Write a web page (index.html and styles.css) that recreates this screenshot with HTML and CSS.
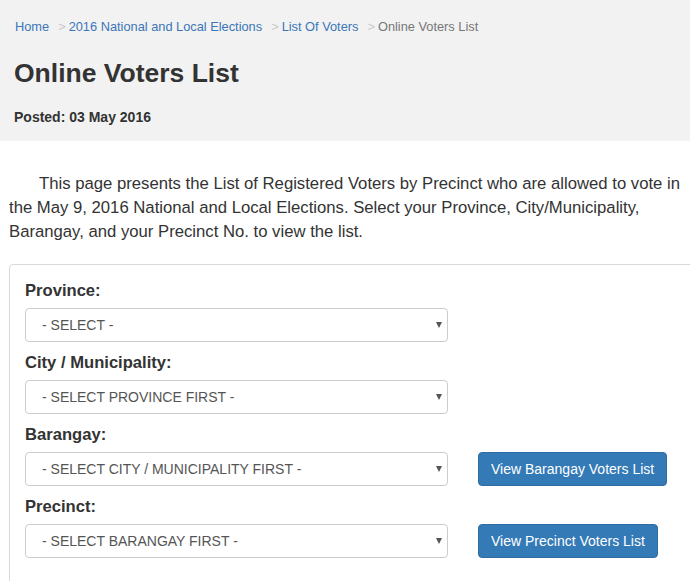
FILE: index.html
```html
<!DOCTYPE html>
<html lang="en">
<head>
<meta charset="utf-8">
<title>Online Voters List</title>
<link rel="stylesheet" href="styles.css">
</head>
<body>
<header class="page-header">
  <nav class="breadcrumb">
    <a href="#">Home</a>
    <span class="sep">&gt;</span>
    <a href="#">2016 National and Local Elections</a>
    <span class="sep">&gt;</span>
    <a href="#">List Of Voters</a>
    <span class="sep">&gt;</span>
    <span class="active">Online Voters List</span>
  </nav>
  <h1 class="title">Online Voters List</h1>
  <div class="posted">Posted: 03 May 2016</div>
</header>
<main class="content">
  <p class="intro">This page presents the List of Registered Voters by Precinct who are allowed to vote in the May 9, 2016 National and Local Elections. Select your Province, City/Municipality, Barangay, and your Precinct No. to view the list.</p>
  <form class="panel">
    <div class="field">
      <label class="label" for="prov">Province:</label>
      <div class="row">
        <div class="select-wrap"><select id="prov" class="select"><option>- SELECT -</option></select></div>
      </div>
    </div>
    <div class="field">
      <label class="label" for="city">City / Municipality:</label>
      <div class="row">
        <div class="select-wrap"><select id="city" class="select"><option>- SELECT PROVINCE FIRST -</option></select></div>
      </div>
    </div>
    <div class="field">
      <label class="label" for="brgy">Barangay:</label>
      <div class="row">
        <div class="select-wrap"><select id="brgy" class="select"><option>- SELECT CITY / MUNICIPALITY FIRST -</option></select></div>
        <button type="button" class="btn">View Barangay Voters List</button>
      </div>
    </div>
    <div class="field">
      <label class="label" for="prec">Precinct:</label>
      <div class="row">
        <div class="select-wrap"><select id="prec" class="select"><option>- SELECT BARANGAY FIRST -</option></select></div>
        <button type="button" class="btn">View Precinct Voters List</button>
      </div>
    </div>
  </form>
</main>
</body>
</html>
```
FILE: styles.css
```css
html, body {
  margin: 0;
  padding: 0;
  overflow: hidden;
}
body {
  font-family: "Liberation Sans", Arial, sans-serif;
  color: #333;
  background: #fff;
}
.page-header {
  background: #f2f2f2;
  padding: 18px 14px 14px 14px;
}
.breadcrumb {
  display: flex;
  align-items: baseline;
  font-size: 12.8px;
  line-height: 18px;
  padding-left: 1px;
}
.breadcrumb a {
  color: #3a76b8;
  text-decoration: none;
}
.breadcrumb .sep {
  color: #c8c8c8;
  padding: 0 3px 0 9px;
}
.breadcrumb .active {
  color: #777;
}
.title {
  margin: 22px 0 0 0;
  font-size: 26.5px;
  line-height: 30px;
  font-weight: bold;
  color: #333;
}
.posted {
  margin-top: 19px;
  font-size: 14px;
  line-height: 20px;
  font-weight: bold;
  color: #333;
}
.content {
  padding: 0 0 0 9px;
}
.intro {
  margin: 31px 0 20px 0;
  font-size: 16.7px;
  line-height: 24px;
  text-indent: 30px;
  padding-right: 2px;
}
.panel {
  border: 1px solid #d6dcd6;
  border-radius: 4px;
  margin-right: -20px;
  padding: 16px 15px 30px 15px;
}
.field {
  margin-bottom: 11px;
}
.label {
  display: block;
  font-size: 16.6px;
  line-height: 20px;
  font-weight: bold;
  margin-bottom: 7px;
}
.row {
  display: flex;
  align-items: center;
  gap: 30px;
}
.select-wrap {
  position: relative;
  width: 423px;
}
.select-wrap::after {
  content: "";
  position: absolute;
  right: 6px;
  top: 14px;
  border-left: 3px solid transparent;
  border-right: 3px solid transparent;
  border-top: 6px solid #555;
  pointer-events: none;
}
.select {
  appearance: none;
  -webkit-appearance: none;
  display: block;
  width: 100%;
  height: 34px;
  box-sizing: border-box;
  border: 1px solid #cccccc;
  border-radius: 4px;
  background: #fff;
  padding: 0 20px 0 16px;
  font-family: "Liberation Sans", Arial, sans-serif;
  font-size: 14px;
  color: #555;
}
.btn {
  height: 34px;
  box-sizing: border-box;
  padding: 0 12px;
  border: 1px solid #2e6da4;
  border-radius: 4px;
  background: #337ab7;
  color: #fff;
  font-family: "Liberation Sans", Arial, sans-serif;
  font-size: 14px;
  line-height: 20px;
}
```
